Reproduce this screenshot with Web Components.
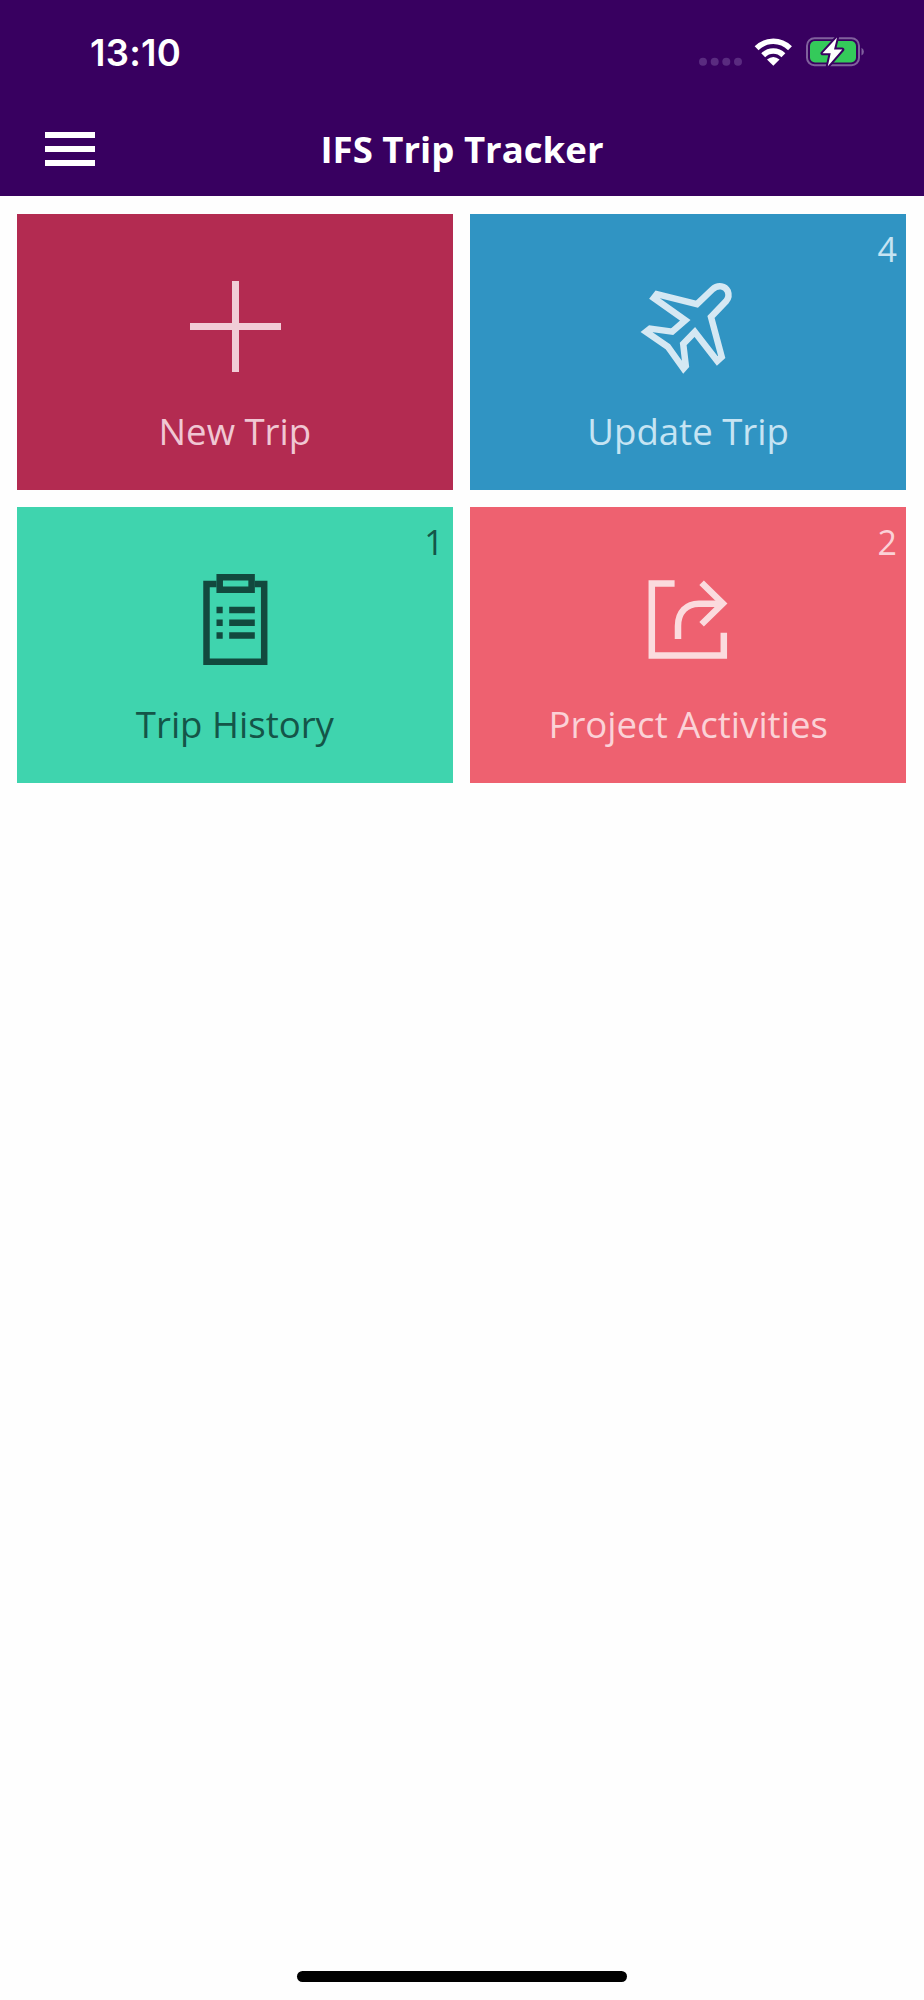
<!DOCTYPE html>
<html lang="en">
<head>
<meta charset="UTF-8">
<title>IFS Trip Tracker</title>
<style>
    body {
        margin: 0;
        background: #fefefe;
        font-family: "Open Sans", "Noto Sans", sans-serif;
    }
</style>
</head>
<body>
<trip-app></trip-app>

<script>
class StatusBar extends HTMLElement {
    constructor() {
        super();
        this.attachShadow({ mode: 'open' });
    }

    connectedCallback() {
        this.shadowRoot.innerHTML = `
            <style>
                :host {
                    display: flex;
                    justify-content: space-between;
                    align-items: center;
                    height: 104px;
                    padding: 0 60px 0 90px;
                    box-sizing: border-box;
                    color: #fff;
                }
                .time {
                    padding-top: 1px;
                    font: 600 36.5px/44px Inter, sans-serif;
                    letter-spacing: 0.25px;
                }
                .icons {
                    display: flex;
                }
                svg {
                    display: block;
                }
                .wifi {
                    margin: 0 13px 0 12px;
                }
            </style>
            <span class="time"><slot></slot></span>
            <div class="icons">
                <svg width="43" height="30" fill="#5a2b80">
                    <circle cx="4" cy="24.7" r="4"/>
                    <circle cx="15.7" cy="24.7" r="4"/>
                    <circle cx="27.3" cy="24.7" r="4"/>
                    <circle cx="39" cy="24.7" r="4"/>
                </svg>
                <svg class="wifi" width="39" height="30" fill="none" stroke="#fff" stroke-width="5.6">
                    <path d="M2.6 11.2Q9.8 4.3 19.3 4.3T36 11.2"/>
                    <path d="M9.2 18.2Q13.5 14 19.3 14T29.4 18.2"/>
                    <path d="M13 22.6Q19.3 17.6 25.6 22.6L19.3 28.8z" fill="#fff" stroke="none"/>
                </svg>
                <svg width="58" height="30">
                    <rect x="1" y="1.2" width="52" height="27" rx="7.5" fill="none" stroke="#80609d" stroke-width="2"/>
                    <path d="M55.5 10.8q2.4 1.3 2.4 3.9t-2.4 3.9z" fill="#80609d"/>
                    <rect x="4" y="4" width="46" height="21.4" rx="5" fill="#34ca5a"/>
                    <path d="M31 .5L16.5 16.3h8.2L21.8 29.2 36.3 12.6H28z" fill="#fff" stroke="#380060" stroke-width="4" stroke-linejoin="round" paint-order="stroke"/>
                </svg>
            </div>
        `;
    }
}

class NavBar extends HTMLElement {
    constructor() {
        super();
        this.attachShadow({ mode: 'open' });
    }

    connectedCallback() {
        this.shadowRoot.innerHTML = `
            <style>
                :host {
                    display: grid;
                    grid-template-columns: 50px 1fr 50px;
                    align-items: center;
                    height: 92px;
                    padding: 0 45px 2px;
                    box-sizing: border-box;
                    color: #fff;
                }
                .menu {
                    display: flex;
                    flex-direction: column;
                    gap: 8.2px;
                    padding: 0;
                    border: 0;
                    background: none;
                }
                .menu i {
                    height: 6px;
                    width: 50px;
                    background: #fff;
                }
                h1 {
                    margin: 0;
                    font-size: 36.6px;
                    line-height: 49px;
                    font-weight: 700;
                    text-align: center;
                }
            </style>
            <button class="menu" aria-label="Menu"><i></i><i></i><i></i></button>
            <h1><slot></slot></h1>
        `;
    }
}

const ICONS = {
    plus: '<path d="M45.5 0v91M0 45.5h91" stroke-width="7"/>',
    plane: '<path d="M13.8 13.2L54 23.2L69.3 8.5C75.5 2.8 82.3 5.3 84.7 10C86.3 14 85.5 17.5 83 20.3L68 36L78.7 76L74.3 80L51.8 51L40.2 63L42.8 85L40.5 87.6L24.8 65.7L3 50.8L7 47.6L29.2 50.7L42.3 39.3L10.8 17z"/>',
    clipboard: '<path d="M26.5 10H16.5V87.8H74.2V10H64.8"/><path d="M29.7 3.2H61.6V15.8H29.7z"/><path d="M26.5 36h6.2M39.2 36h25.6M26.5 48.8h6.2M39.2 48.8h25.6M26.5 61.6h6.2M39.2 61.6h25.6"/>',
    share: '<g transform="translate(-1.2 0)"><path d="M32.8 9.6H10V81.4H82V58.7"/><path d="M36.2 65V52C36.2 38 45 29.7 57 29.7H80"/><path d="M59.8 8.7L81 29.5L59.8 50.3"/></g>'
};

class TripTile extends HTMLElement {
    constructor() {
        super();
        this.attachShadow({ mode: 'open' });
    }

    connectedCallback() {
        const count = this.getAttribute('count');
        this.shadowRoot.innerHTML = `
            <style>
                :host {
                    position: relative;
                    display: flex;
                    flex-direction: column;
                    align-items: center;
                    box-sizing: border-box;
                    padding-top: 67px;
                    background: var(--tile);
                    color: var(--ink);
                }
                svg {
                    display: block;
                    margin-left: 1px;
                    overflow: visible;
                    fill: none;
                    stroke: var(--icon);
                    stroke-width: 6.5;
                }
                .label {
                    margin-top: 35px;
                    font-size: 36.6px;
                    line-height: 49px;
                    white-space: nowrap;
                }
                .count {
                    position: absolute;
                    top: 11px;
                    right: 9px;
                    font-size: 34px;
                    line-height: 48px;
                }
            </style>
            <svg width="91" height="91" viewBox="0 0 91 91">${ICONS[this.getAttribute('icon')]}</svg>
            <span class="label"><slot></slot></span>
            ${count ? `<span class="count">${count}</span>` : ''}
        `;
    }
}

class TripApp extends HTMLElement {
    constructor() {
        super();
        this.attachShadow({ mode: 'open' });
    }

    connectedCallback() {
        this.shadowRoot.innerHTML = `
            <style>
                :host {
                    display: flex;
                    flex-direction: column;
                    height: 2000px;
                }
                header {
                    background: #380060;
                }
                main {
                    flex: 1;
                    display: grid;
                    grid-template-columns: 1fr 1fr;
                    grid-auto-rows: 276px;
                    align-content: start;
                    gap: 17.5px;
                    padding: 17.6px 18px 0 17px;
                }
                .red { --tile: #b32b51; --ink: #f0c7d3; --icon: #f1cdd7; }
                .blue { --tile: #3094c3; --ink: #c6e4f3; --icon: #d5e8f3; }
                .green { --tile: #3fd4ae; --ink: #145548; --icon: #12493e; }
                .coral { --tile: #ee6170; --ink: #fbd2d7; --icon: #fbdbde; }
                .home {
                    width: 330px;
                    height: 11px;
                    margin: 0 auto 18px;
                    border-radius: 6px;
                    background: #000;
                }
            </style>
            <header>
                <status-bar>13:10</status-bar>
                <nav-bar>IFS Trip Tracker</nav-bar>
            </header>
            <main>
                <trip-tile class="red" icon="plus">New Trip</trip-tile>
                <trip-tile class="blue" icon="plane" count="4">Update Trip</trip-tile>
                <trip-tile class="green" icon="clipboard" count="1">Trip History</trip-tile>
                <trip-tile class="coral" icon="share" count="2">Project Activities</trip-tile>
            </main>
            <div class="home"></div>
        `;
    }
}

customElements.define('status-bar', StatusBar);
customElements.define('nav-bar', NavBar);
customElements.define('trip-tile', TripTile);
customElements.define('trip-app', TripApp);
</script>
</body>
</html>
